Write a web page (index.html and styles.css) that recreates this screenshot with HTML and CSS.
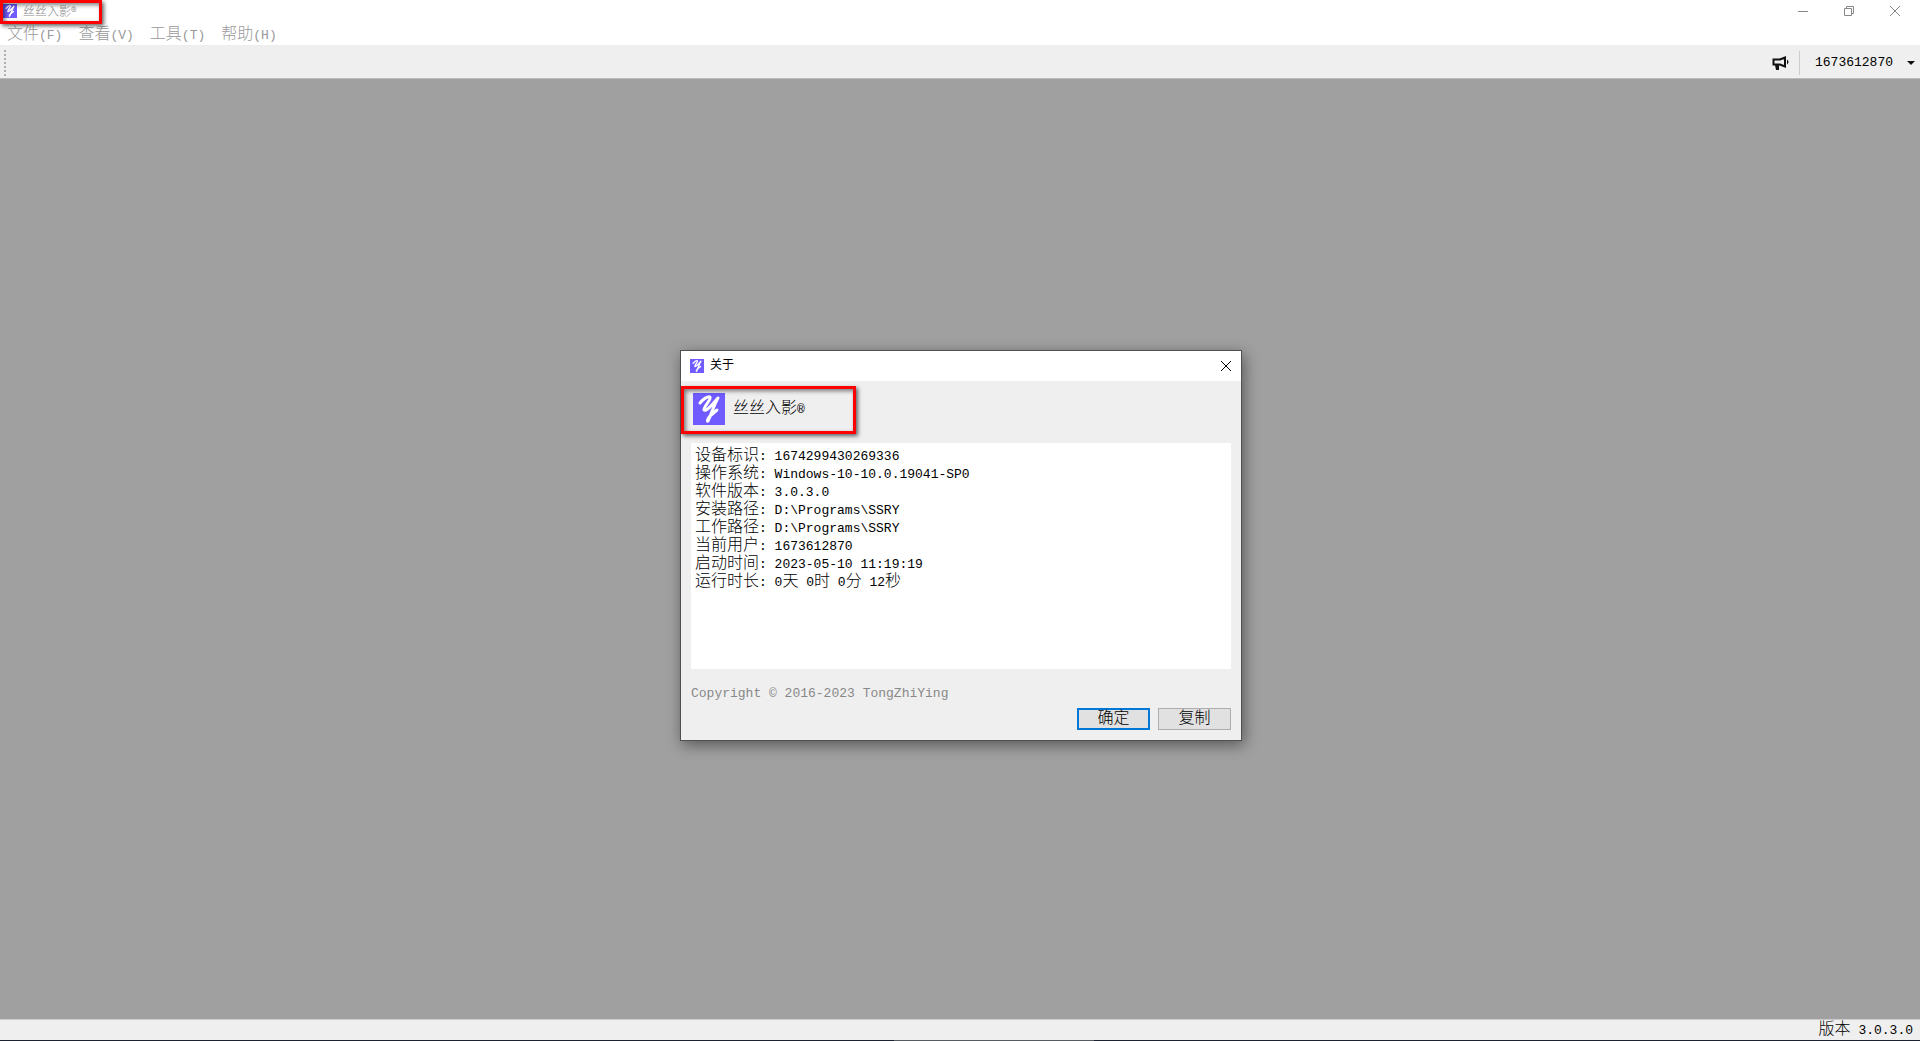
FILE: index.html
```html
<!DOCTYPE html>
<html lang="zh-CN">
<head>
	<meta charset="UTF-8">
	<meta name="viewport" content="width=device-width, initial-scale=1.0">
	<title>丝丝入影®</title>
	<link rel="stylesheet" href="styles.css">
</head>
<body>
	<svg class="defs" width="0" height="0" aria-hidden="true">
		<symbol id="logo" viewBox="0 0 32 32">
			<rect width="32" height="32" fill="#6f5bff"/>
			<path d="M7 10C10 6 15 3 17 4C19 6 10 14 11 17C13 19 19 12 25 5C21 12 18 22 15 28C14 29 14 26 17 23L24 17" fill="none" stroke="#fff" stroke-width="3" stroke-linecap="round" stroke-linejoin="round"/>
		</symbol>
	</svg>
	<div class="window">
		<header class="title-bar">
			<svg class="logo-small"><use href="#logo"/></svg>
			<span class="title-text">丝丝入影®</span>
			<div class="window-buttons">
				<button type="button" aria-label="最小化"><svg width="12" height="12"><path d="M1 6.500h10"/></svg></button>
				<button type="button" aria-label="还原"><svg width="12" height="12"><path d="M1.500 3.500h7v7h-7zM3.500 3.500v-2h7v7h-2"/></svg></button>
				<button type="button" aria-label="关闭"><svg width="12" height="12"><path d="M1 1l10 10M11 1l-10 10"/></svg></button>
			</div>
			<div class="highlight highlight-title"></div>
		</header>
		<nav class="menu-bar">
			<button type="button">文件<span class="mono">(F)</span></button>
			<button type="button">查看<span class="mono">(V)</span></button>
			<button type="button">工具<span class="mono">(T)</span></button>
			<button type="button">帮助<span class="mono">(H)</span></button>
		</nav>
		<div class="toolbar">
			<span class="grip"></span>
			<button type="button" class="notice" aria-label="公告">
				<svg width="18" height="16" viewBox="0 0 18 16">
					<path d="M1.500 4.500H8L13 2.500V11.500L8 9.500H1.500Z" fill="none" stroke="#111" stroke-width="2"/>
					<path d="M3 10h4v5H4z" fill="#111"/>
					<path d="M15 4.500q3 2.500 0 5z" fill="#111"/>
				</svg>
			</button>
			<button type="button" class="account mono">1673612870<span class="arrow"></span></button>
		</div>
		<main class="workspace">
			<section class="dialog" role="dialog" aria-labelledby="dialogTitle">
				<div class="dialog-title">
					<svg class="logo-small"><use href="#logo"/></svg>
					<span id="dialogTitle">关于</span>
					<button type="button" class="close" aria-label="关闭"><svg width="12" height="12"><path d="M1 1l10 10M11 1l-10 10"/></svg></button>
				</div>
				<div class="dialog-body">
					<div class="product">
						<svg class="logo-large"><use href="#logo"/></svg>
						<span>丝丝入影<span class="mono">®</span></span>
						<div class="highlight highlight-product"></div>
					</div>
					<div class="info">
						<div>设备标识<span class="mono">: 1674299430269336</span></div>
						<div>操作系统<span class="mono">: Windows-10-10.0.19041-SP0</span></div>
						<div>软件版本<span class="mono">: 3.0.3.0</span></div>
						<div>安装路径<span class="mono">: D:\Programs\SSRY</span></div>
						<div>工作路径<span class="mono">: D:\Programs\SSRY</span></div>
						<div>当前用户<span class="mono">: 1673612870</span></div>
						<div>启动时间<span class="mono">: 2023-05-10 11:19:19</span></div>
						<div>运行时长<span class="mono">: 0</span>天<span class="mono"> 0</span>时<span class="mono"> 0</span>分<span class="mono"> 12</span>秒</div>
					</div>
					<div class="copyright mono">Copyright © 2016-2023 TongZhiYing</div>
					<div class="actions">
						<button type="button" class="btn btn-default">确定</button>
						<button type="button" class="btn">复制</button>
					</div>
				</div>
			</section>
		</main>
		<footer class="status-bar">版本<span class="mono"> 3.0.3.0</span></footer>
		<div class="taskbar-edge"></div>
	</div>
</body>
</html>
```

FILE: styles.css
```css
* {
	box-sizing: border-box;
}
body {
	margin: 0;
	font-family: "Liberation Mono", "Noto Sans CJK SC", monospace;
	font-size: 16px;
	font-weight: 300;
	line-height: 18px;
	color: #000;
	background: #a0a0a0;
}
button {
	font: inherit;
	color: inherit;
	background: none;
	border: 0;
	padding: 0;
}
svg {
	display: block;
	flex: none;
}
.defs {
	position: absolute;
}
.mono {
	font-size: 13px;
	white-space: pre;
}
.window {
	display: flex;
	flex-direction: column;
	height: 100vh;
	overflow: hidden;
}
.title-bar {
	position: relative;
	display: flex;
	align-items: center;
	height: 22px;
	padding-left: 3px;
	background: #fff;
	color: #888;
}
.title-text {
	margin-left: 6px;
	font-family: "Noto Sans CJK SC", sans-serif;
	font-size: 12px;
}
.logo-small {
	width: 14px;
	height: 14px;
}
.window-buttons {
	display: flex;
	margin-left: auto;
	padding-right: 2px;
}
.window-buttons button {
	display: flex;
	justify-content: center;
	align-items: center;
	width: 46px;
	height: 20px;
}
.window-buttons path {
	fill: none;
	stroke: #888;
}
.highlight {
	position: absolute;
	border: 3px solid #f00;
	box-shadow: 2px 2px 4px rgba(0, 0, 0, 0.6), inset 2px 2px 4px rgba(0, 0, 0, 0.5);
	pointer-events: none;
}
.highlight-title {
	top: 0;
	left: 0;
	width: 102px;
	height: 24px;
}
.menu-bar {
	display: flex;
	gap: 16px;
	height: 24px;
	padding: 3px 0 0 7px;
	background: #fff;
	color: #999;
	border-bottom: 1px solid #eee;
}
.toolbar {
	display: flex;
	align-items: center;
	height: 33px;
	padding-top: 1px;
	background: #efefef;
	border-bottom: 1px solid #bbb;
}
.grip {
	width: 2px;
	height: 26px;
	margin-left: 4px;
	background: repeating-linear-gradient(#b0b0b0 0 2px, transparent 2px 4px);
}
.notice {
	margin-left: auto;
	padding-right: 9px;
}
.account {
	display: flex;
	align-items: center;
	height: 24px;
	padding: 0 5px 0 15px;
	border-left: 1px solid #ccc;
}
.arrow {
	margin-left: 14px;
	border: 4px solid transparent;
	border-top-color: #111;
	border-bottom: 0;
}
.workspace {
	flex: 1;
	display: flex;
	justify-content: center;
	align-items: center;
	padding: 0 0 7px 2px;
	background: #a0a0a0;
}
.dialog {
	width: 562px;
	background: #efefef;
	border: 1px solid #505050;
	box-shadow: 2px 4px 14px rgba(0, 0, 0, 0.45);
}
.dialog-title {
	display: flex;
	align-items: center;
	height: 30px;
	padding: 0 9px;
	gap: 6px;
	background: #fff;
	font-size: 12px;
	font-weight: 400;
}
.close {
	margin-left: auto;
}
.close path {
	stroke: #000;
}
.dialog-body {
	padding: 12px 10px 10px;
}
.product {
	position: relative;
	display: flex;
	align-items: center;
	gap: 8px;
	padding-left: 2px;
	height: 32px;
	margin-bottom: 18px;
}
.logo-large {
	width: 32px;
	height: 32px;
}
.highlight-product {
	top: -7px;
	left: -10px;
	width: 175px;
	height: 48px;
}
.info {
	height: 226px;
	padding: 4px;
	background: #fff;
}
.info div {
	height: 18px;
}
.copyright {
	margin-top: 16px;
	color: #888;
}
.actions {
	display: flex;
	justify-content: flex-end;
	gap: 8px;
	margin-top: 5px;
}
.btn {
	width: 73px;
	height: 22px;
	background: #e1e1e1;
	border: 1px solid #adadad;
}
.btn-default {
	border: 2px solid #0078d7;
}
.status-bar {
	height: 21px;
	padding-right: 7px;
	line-height: 20px;
	text-align: right;
	background: #efefef;
	border-top: 1px solid #ccc;
}
.taskbar-edge {
	height: 1px;
	background: linear-gradient(#555b60, #555b60) 52% 0 / 200px 1px no-repeat #1c2230;
}
```
